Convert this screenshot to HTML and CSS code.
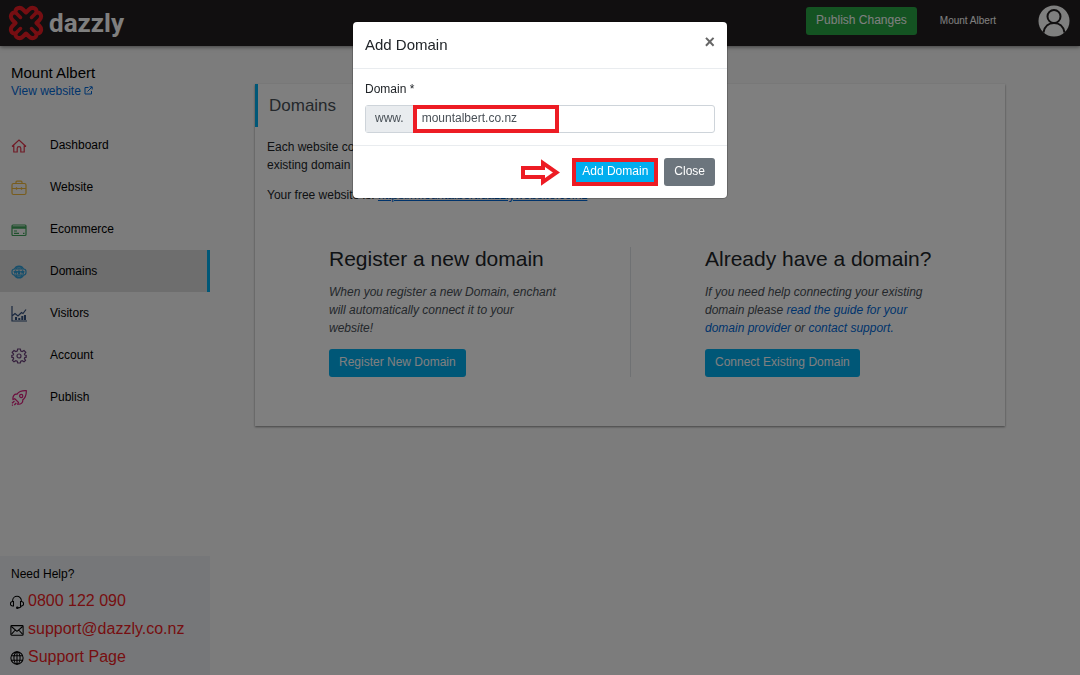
FILE: index.html
```html
<!DOCTYPE html>
<html lang="en">
<head>
    <meta charset="UTF-8">
    <meta name="viewport" content="width=device-width, initial-scale=1.0">
    <title>Domains - dazzly</title>
    <link rel="stylesheet" href="styles.css">
</head>
<body>

<header class="topbar">
    <a class="logo" href="#">
        <svg width="36" height="36" viewBox="0 0 36 36" fill="none" stroke="#ed1c24" stroke-width="4" stroke-linecap="round" stroke-linejoin="round">
            <path d="M18 7.500L15 4.500C12 1.500 7 3 7.500 7.500C3 7 1.500 12 4.500 15L7.500 18L4.500 21C1.500 24 3 29 7.500 28.500C7 33 12 34.500 15 31.500L18 28.500L21 31.500C24 34.500 29 33 28.500 28.500C33 29 34.500 24 31.500 21L28.500 18L31.500 15C34.500 12 33 7 28.500 7.500C29 3 24 1.500 21 4.500Z"/>
            <path stroke-width="3.500" d="M8 8l4.500 4.500M28 8l-4.500 4.500M8 28l4.500-4.500M28 28l-4.500-4.500"/>
        </svg>
        <span>dazzly</span>
    </a>
    <button class="btn btn-success">Publish Changes</button>
    <span class="user-name">Mount Albert</span>
    <a class="avatar" href="#" aria-label="Profile">
        <svg width="32" height="32" viewBox="0 0 32 32">
            <circle cx="16" cy="16" r="15.500" fill="#fff"/>
            <g fill="none" stroke="#231f20" stroke-width="2">
                <circle cx="16" cy="11.500" r="6.500"/>
                <path d="M5.500 27.500C6.500 21 11 18 16 18s9.500 3 10.500 9.500"/>
            </g>
        </svg>
    </a>
</header>

<div class="layout">
    <aside class="sidebar">
        <div class="site">
            <div class="site-name">Mount Albert</div>
            <a href="#">View website
                <svg width="9" height="9" viewBox="0 0 9 9" fill="none" stroke="currentColor"><path d="M4.500 1.500H1v6.500h6.500V5M3.500 5.500L8 1M5.500.800H8.200V3.500"/></svg>
            </a>
        </div>

        <nav class="menu">
            <a href="#">
                <svg class="c-red" viewBox="0 0 16 16"><path d="M1 8.500L8 2l7 6.500M2.800 7.500V14h3.400v-3.500a1.800 1.800 0 0 1 3.600 0V14h3.400V7.500M1 8.500h1.800M13.200 8.500H15"/></svg>
                Dashboard
            </a>
            <a href="#">
                <svg class="c-yellow" viewBox="0 0 16 16"><rect x="1" y="3.500" width="14" height="11" rx="1.500"/><path d="M5 3.500V2.200Q5 1.200 6 1.200h4q1 0 1 1v1.300M1 8.500h14M5.500 7.200v2.600M10.500 7.200v2.600"/></svg>
                Website
            </a>
            <a href="#">
                <svg class="c-green" viewBox="0 0 16 16"><rect x="1" y="3" width="14" height="10.500" rx="1"/><path stroke-width="2.500" d="M1 5.500h14"/><path d="M3 9h3M3 11.300h5M12 11.300h1.500"/></svg>
                Ecommerce
            </a>
            <a class="active" href="#">
                <svg class="c-blue" viewBox="0 0 16 16"><path d="M3.500 5C5 1 11 1 12.500 5M3.500 11c1.500 4 7.500 4 9 0M5.500 5C6.500 1 9.500 1 10.500 5M5.500 11c1 4 4 4 5 0M8 2v3M8 11v3"/><rect x="1" y="5" width="14" height="6" rx="2.500"/><path d="M3 7l.8 2 .8-2 .8 2 .6-2M6.700 7l.7 2 .6-2 .7 2 .6-2M10.300 7l.7 2 .7-2 .7 2 .6-2"/></svg>
                Domains
            </a>
            <a href="#">
                <svg class="c-navy" viewBox="0 0 16 16"><path d="M1 0v15h15M1 10l3-2.500 3 2.500 3.500-3.500 1.500 1L15 3.500"/><path stroke-width="2" d="M5 14v-3M8.300 14v-2M11.300 14v-4M14 14V9"/></svg>
                Visitors
            </a>
            <a href="#">
                <svg class="c-purple" viewBox="0 0 16 16"><circle cx="8" cy="8" r="2"/><path d="M6.700 1h2.600l.5 2 1.400.6L13 2.500l1.800 1.800-1.400 1.800.4 1 1.400.3v1.800l-1.400.4-.4 1 1.100 1.700-1.500 1.500-1.800-1.100-1.400.6-.5 1.700H6.700l-.5-1.700-1.400-.6L3 13.800l-1.500-1.500 1.100-1.700-.4-1L.8 9.200V7.400l1.400-.3.4-1L1.200 4.300 3 2.500l1.800 1.100L6.200 3z"/></svg>
                Account
            </a>
            <a href="#">
                <svg class="c-pink" viewBox="0 0 16 16"><path d="M15.300.7C11 .5 7.500 2 6 4.200 3.500 3.500 1.500 6 2 9.500l1.800-.8 3.700 3.600-.8 1.900c3.500.3 5.500-1.700 5-4.200C14 8 15.500 5 15.300.7zM3.500 11l-2.500 2.200M5.300 13l-2 2M1 15.500l.8-.7"/><circle cx="10.200" cy="6" r="1.600"/></svg>
                Publish
            </a>
        </nav>

        <div class="help">
            <div class="help-title">Need Help?</div>
            <a href="#">
                <svg viewBox="0 0 16 16"><path d="M3 8V6.500a5 5 0 0 1 10 0V8M4 7.500v5H3a2.500 2.500 0 0 1 0-5zM12 7.500v5h1a2.500 2.500 0 0 0 0-5zM13 12.500q-.5 2.200-4 2.200"/><circle cx="8.300" cy="14.500" r=".8"/></svg>
                0800 122 090
            </a>
            <a href="#">
                <svg viewBox="0 0 16 16"><rect x="1" y="3" width="14" height="11" rx="1"/><path d="M1.500 4L8 9.500 14.500 4M1.500 13L6 8M14.500 13L10 8"/></svg>
                support@dazzly.co.nz
            </a>
            <a href="#">
                <svg viewBox="0 0 16 16"><circle cx="8" cy="8" r="7"/><ellipse cx="8" cy="8" rx="3.500" ry="7"/><path d="M8 1v14M1.500 5.500h13M1.500 10.500h13"/></svg>
                Support Page
            </a>
        </div>
    </aside>

    <main class="content">
        <section class="card">
            <h1 class="card-title">Domains</h1>
            <div class="intro">
                <p>Each website comes with a free domain. You can connect your own existing domain or register a new one.</p>
                <p>Your free website is: <a href="#">https://mountalbert.dazzlywebsite.co.nz</a></p>
            </div>
            <div class="options">
                <div class="option">
                    <h2>Register a new domain</h2>
                    <p>When you register a new Domain, enchant will automatically connect it to your website!</p>
                    <button class="btn btn-primary">Register New Domain</button>
                </div>
                <div class="option">
                    <h2>Already have a domain?</h2>
                    <p>If you need help connecting your existing domain please <a href="#">read the guide for your domain provider</a> or <a href="#">contact support.</a></p>
                    <button class="btn btn-primary">Connect Existing Domain</button>
                </div>
            </div>
        </section>
    </main>
</div>

<div class="backdrop">
    <form class="modal" role="dialog" aria-labelledby="modal-title">
        <div class="modal-header">
            <h2 id="modal-title">Add Domain</h2>
            <button class="close" type="button" aria-label="Close">×</button>
        </div>
        <div class="modal-body">
            <label for="domain">Domain *</label>
            <div class="input-group">
                <span class="prefix">www.</span>
                <div class="field">
                    <input type="text" id="domain" value="mountalbert.co.nz">
                    <span class="marker"></span>
                </div>
            </div>
        </div>
        <div class="modal-footer">
            <svg class="arrow" width="39" height="28" viewBox="0 0 39 28"><path d="M2 10h20V5l13.500 9.500L22 24v-5H2z" fill="#fff" stroke="#ed1c24" stroke-width="4"/></svg>
            <button class="btn btn-primary marked" type="button">Add Domain</button>
            <button class="btn btn-secondary" type="button">Close</button>
        </div>
    </form>
</div>

</body>
</html>
```
FILE: styles.css
```css
* {
    margin: 0;
    padding: 0;
    box-sizing: border-box;
}

body {
    display: flex;
    flex-direction: column;
    min-height: 100vh;
    background: #f8f8f8;
    font-family: "Liberation Sans", Arial, sans-serif;
    font-size: 12px;
    line-height: 18px;
    color: #212529;
}

a {
    color: #0069d9;
    text-decoration: none;
}

h1, h2 {
    font-weight: normal;
}

.btn {
    height: 28px;
    padding: 0 10px 2px;
    border: 0;
    border-radius: 3px;
    font: inherit;
    color: #fff;
    cursor: pointer;
}

.btn-success {
    background: #28a745;
}

.btn-primary {
    background: #00aeef;
}

.btn-secondary {
    background: #6c757d;
}

/* top bar */

.topbar {
    display: flex;
    align-items: center;
    height: 46px;
    padding: 0 10px 4px 8px;
    background: #231f20;
    box-shadow: 0 1px 4px rgba(0, 0, 0, 0.5);
    color: #fff;
}

.logo {
    display: flex;
    align-items: center;
    gap: 5px;
    margin-right: auto;
    padding-top: 4px;
    font-family: Roboto, sans-serif;
    font-size: 26px;
    font-weight: bold;
    color: #fff;
}

.user-name {
    margin: 0 42px 0 23px;
    font-size: 10px;
}

.avatar {
    display: flex;
}

/* sidebar */

.layout {
    display: flex;
    flex: 1;
}

.sidebar {
    display: flex;
    flex-direction: column;
    width: 210px;
}

.site {
    padding: 17px 11px 24px;
}

.site-name {
    font-size: 15px;
    line-height: 19px;
    color: #000;
}

.menu a {
    display: flex;
    align-items: center;
    gap: 23px;
    height: 42px;
    padding: 0 0 1px 11px;
    color: #000;
}

.menu svg {
    width: 16px;
    height: 16px;
    margin-top: 2px;
    fill: none;
    stroke: currentColor;
    stroke-width: 1.2;
}

.menu .active {
    background: #dcdcdc;
    border-right: 3px solid #00aeef;
}

.c-red { color: #e0344b; }
.c-yellow { color: #f0b93a; }
.c-green { color: #3fa35a; }
.c-blue { color: #2f9fd8; }
.c-navy { color: #33507f; }
.c-purple { color: #6a3f7a; }
.c-pink { color: #d81b7a; }

.help {
    margin-top: auto;
    padding: 9px 10px 4px;
    background: #eceff2;
}

.help-title {
    margin: 0 0 4px 1px;
    color: #000;
}

.help a {
    display: flex;
    align-items: center;
    gap: 4px;
    height: 28px;
    font-size: 16px;
    color: #ed1c24;
}

.help svg {
    width: 14px;
    height: 14px;
    margin-top: 2px;
    fill: none;
    stroke: #000;
    stroke-width: 1.2;
}

/* content */

.content {
    flex: 1;
    padding: 38px 75px 38px 45px;
}

.card {
    background: #fff;
    box-shadow: 0 1px 2px rgba(0, 0, 0, 0.45);
    padding-bottom: 49px;
}

.card-title {
    padding-left: 11px;
    border-left: 3px solid #00aeef;
    font-size: 17px;
    line-height: 43px;
    color: #495057;
}

.intro {
    max-width: 400px;
    padding: 11px 12px 0;
}

.intro p {
    margin-bottom: 12px;
}

.intro a {
    text-decoration: underline;
}

.options {
    display: grid;
    grid-template-columns: 1fr 1fr;
    margin-top: 43px;
}

.option {
    padding: 0 72px 0 74px;
}

.option + .option {
    border-left: 1px solid #dee2e6;
}

.option h2 {
    font-size: 21px;
    line-height: 24px;
}

.option p {
    margin: 12px 0;
    font-style: italic;
    color: #495057;
}

/* modal */

.backdrop {
    position: fixed;
    inset: 0;
    display: flex;
    justify-content: center;
    align-items: flex-start;
    padding: 22px 12px;
    background: rgba(0, 0, 0, 0.5);
}

.modal {
    width: 100%;
    max-width: 374px;
    background: #fff;
    border-radius: 4px;
    box-shadow: 0 0 0 1px rgba(0, 0, 0, 0.2);
}

.modal-header {
    display: flex;
    justify-content: space-between;
    padding: 12px;
    border-bottom: 1px solid #e9ecef;
}

.modal-header h2 {
    font-size: 15px;
    line-height: 22px;
}

.close {
    height: 16px;
    background: none;
    border: 0;
    font-family: inherit;
    font-size: 18px;
    font-weight: bold;
    line-height: 16px;
    color: #666;
    cursor: pointer;
}

.modal-body {
    padding: 11px 12px 12px;
}

.modal-body label {
    display: block;
    margin-bottom: 7px;
}

.input-group {
    display: flex;
    height: 28px;
    border: 1px solid #ced4da;
    border-radius: 3px;
}

.prefix {
    padding: 3px 9px;
    background: #e9ecef;
    color: #495057;
}

.field {
    position: relative;
    flex: 1;
}

.field input {
    width: 100%;
    height: 24px;
    padding: 0 9px;
    border: 0;
    outline: 0;
    background: none;
    font: inherit;
    color: #495057;
}

/* red highlight drawn over the typed domain */
.marker {
    position: absolute;
    top: -1px;
    left: 0;
    width: 146px;
    height: 28px;
    border: 4px solid #ed1c24;
    pointer-events: none;
}

.modal-footer {
    display: flex;
    justify-content: flex-end;
    align-items: center;
    gap: 6px;
    padding: 12px;
    border-top: 1px solid #e9ecef;
}

.arrow {
    margin-right: 6px;
}

.marked {
    padding: 0 6px 2px;
    border: 4px solid #ed1c24;
    border-radius: 0;
}
```
